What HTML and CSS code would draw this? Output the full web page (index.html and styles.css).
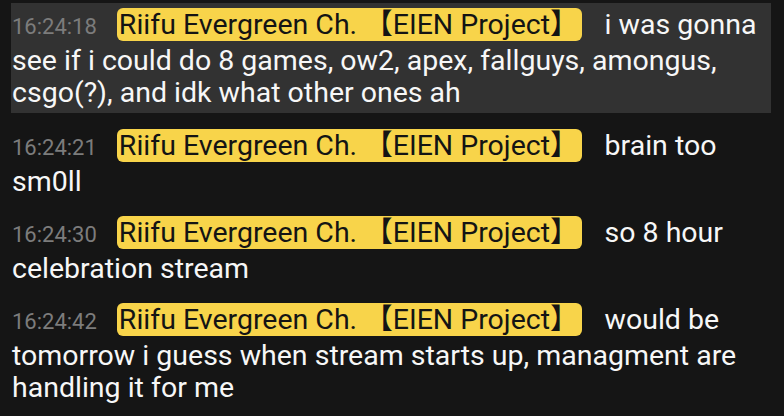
FILE: index.html
```html
<!DOCTYPE html>
<html>
	<head>
		<meta charset="utf-8">
		<title>chat</title>
		<link rel="stylesheet" href="styles.css">
	</head>
	<body>
		<div class="chat">
			<div class="msg active"><span class="time">16:24:18</span><span class="name">Riifu Evergreen Ch. 【EIEN Project】</span><span class="text">i was gonna see if i could do 8 games, ow2, apex, fallguys, amongus, csgo(?), and idk what other ones ah</span></div>
			<div class="msg"><span class="time">16:24:21</span><span class="name">Riifu Evergreen Ch. 【EIEN Project】</span><span class="text">brain too sm0ll</span></div>
			<div class="msg"><span class="time">16:24:30</span><span class="name">Riifu Evergreen Ch. 【EIEN Project】</span><span class="text">so 8 hour celebration stream</span></div>
			<div class="msg"><span class="time">16:24:42</span><span class="name">Riifu Evergreen Ch. 【EIEN Project】</span><span class="text">would be tomorrow i guess when stream starts up, managment are handling it for me</span></div>
		</div>
	</body>
</html>
```

FILE: styles.css
```css
html,
body {
	margin: 0;
	padding: 0;
	background: #151515;
	height: 100%;
}

body {
	font-family: Roboto, "Noto Sans CJK JP", sans-serif;
	color: #f7f7f7;
	overflow: hidden;
}

.chat {
	padding: 3px 13px 0 11px;
}

.msg {
	padding: 5px 1px 4px;
	margin-bottom: 9px;
	font-size: 28.5px;
	line-height: 32px;
}

.msg.active {
	background: #323232;
	margin-bottom: 11px;
}

.time {
	font-size: 22px;
	line-height: 20px;
	color: #7c7c7c;
	margin-right: 20px;
}

.name {
	display: inline-block;
	height: 33px;
	line-height: 33px;
	padding: 0 3px 0 2px;
	margin: 0 23px 4px 0;
	border-radius: 6px;
	background: #f8d44a;
	color: #141414;
}
```
